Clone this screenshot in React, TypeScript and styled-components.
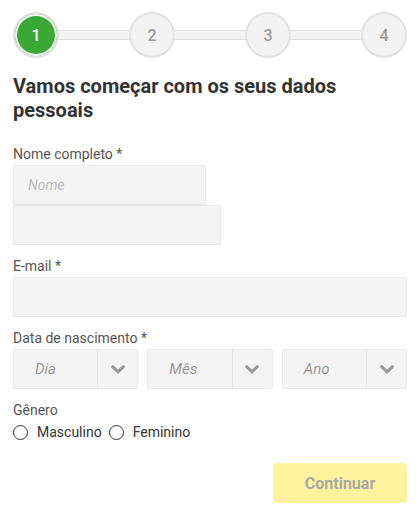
import { Fragment } from 'react';
import styled, { createGlobalStyle } from 'styled-components';

const GlobalStyle = createGlobalStyle`
  html, body {
    margin: 0;
    padding: 0;
    background: #ffffff;
    font-family: Roboto, 'Liberation Sans', sans-serif;
  }
`;

const Page = styled.div`
  width: 420px;
  box-sizing: border-box;
  padding: 12px 13px 0;
  color: #333;
`;

const Stepper = styled.div`
  display: flex;
  align-items: center;
`;

const StepCircle = styled.div<{ $active?: boolean }>`
  position: relative;
  z-index: 1;
  flex: none;
  width: 46px;
  height: 46px;
  box-sizing: border-box;
  border-radius: 50%;
  border: 2px solid #e2e2e2;
  background: ${(p) => (p.$active ? '#3aaa35' : '#f3f3f3')};
  box-shadow: ${(p) => (p.$active ? 'inset 0 0 0 2px #f4f4f4' : 'none')};
  display: flex;
  align-items: center;
  justify-content: center;
  font-size: 16px;
  font-weight: 500;
  color: ${(p) => (p.$active ? '#ffffff' : '#999')};
`;

const Connector = styled.div`
  flex: 1;
  height: 10px;
  margin: 0 -3px;
  box-sizing: border-box;
  background: #f3f3f3;
  border-top: 1px solid #e2e2e2;
  border-bottom: 1px solid #e2e2e2;
`;

const Title = styled.h1`
  margin: 16px 0 0;
  font-size: 20px;
  line-height: 24px;
  font-weight: 700;
  color: #333;
`;

const Form = styled.form`
  margin-top: 23px;
  display: flex;
  flex-direction: column;
`;

const Field = styled.div`
  display: flex;
  flex-direction: column;
  & + & {
    margin-top: 12px;
  }
`;

const Label = styled.label`
  font-size: 14px;
  line-height: 18px;
  color: #555;
  margin-bottom: 2px;
`;

const TextInput = styled.input<{ $width?: number }>`
  width: ${(p) => (p.$width ? `${p.$width}px` : '100%')};
  height: 40px;
  box-sizing: border-box;
  margin: 0;
  padding: 0 14px;
  background: #f4f4f4;
  border: 1px solid #e9e9e9;
  border-radius: 2px;
  font-family: inherit;
  font-size: 14px;
  color: #333;
  outline: none;
  &::placeholder {
    color: #bbb;
    font-style: italic;
  }
`;

const SelectRow = styled.div`
  display: grid;
  grid-template-columns: repeat(3, 1fr);
  gap: 9px;
`;

const SelectBox = styled.div`
  display: flex;
  height: 40px;
  box-sizing: border-box;
  background: #f4f4f4;
  border: 1px solid #e9e9e9;
  border-radius: 2px;
`;

const SelectText = styled.span`
  flex: 1;
  display: flex;
  align-items: center;
  padding-left: 21px;
  font-size: 15px;
  font-style: italic;
  color: #999;
`;

const SelectArrow = styled.span`
  width: 39px;
  display: flex;
  align-items: center;
  justify-content: center;
  border-left: 1px solid #e6e6e6;
  color: #999;
`;

const RadioRow = styled.div`
  display: flex;
  align-items: center;
  margin-top: 1px;
`;

const RadioOption = styled.label`
  display: flex;
  align-items: center;
  gap: 9px;
  font-size: 14px;
  line-height: 20px;
  color: #333;
  margin-right: 7px;
`;

const RadioDot = styled.span`
  width: 15px;
  height: 15px;
  box-sizing: border-box;
  border-radius: 50%;
  border: 1px solid #333;
  background: #fff;
`;

const Footer = styled.div`
  display: flex;
  justify-content: flex-end;
  margin-top: 21px;
`;

const SubmitButton = styled.button`
  width: 134px;
  height: 40px;
  border: none;
  border-radius: 4px;
  background: #fff3a0;
  color: #aaa8a0;
  font-family: inherit;
  font-size: 16px;
  font-weight: 700;
`;

const Chevron = () => (
  <svg width="14" height="9" viewBox="0 0 14 9" fill="none">
    <polyline
      points="1.8,1.8 7,6.8 12.2,1.8"
      stroke="currentColor"
      strokeWidth="3"
      strokeLinecap="square"
    />
  </svg>
);

const steps = ['1', '2', '3', '4'];
const dateParts = ['Dia', 'Mês', 'Ano'];

export default function App() {
  return (
    <>
      <GlobalStyle />
      <Page>
        <Stepper>
          {steps.map((s, i) => (
            <Fragment key={s}>
              {i > 0 && <Connector />}
              <StepCircle $active={i === 0}>{s}</StepCircle>
            </Fragment>
          ))}
        </Stepper>
        <Title>Vamos começar com os seus dados pessoais</Title>
        <Form onSubmit={(e) => e.preventDefault()}>
          <Field>
            <Label>Nome completo *</Label>
            <TextInput $width={193} placeholder="Nome" />
            <TextInput $width={208} />
          </Field>
          <Field>
            <Label>E-mail *</Label>
            <TextInput />
          </Field>
          <Field>
            <Label>Data de nascimento *</Label>
            <SelectRow>
              {dateParts.map((d) => (
                <SelectBox key={d}>
                  <SelectText>{d}</SelectText>
                  <SelectArrow>
                    <Chevron />
                  </SelectArrow>
                </SelectBox>
              ))}
            </SelectRow>
          </Field>
          <Field>
            <Label>Gênero</Label>
            <RadioRow>
              <RadioOption>
                <RadioDot />
                Masculino
              </RadioOption>
              <RadioOption>
                <RadioDot />
                Feminino
              </RadioOption>
            </RadioRow>
          </Field>
          <Footer>
            <SubmitButton type="submit">Continuar</SubmitButton>
          </Footer>
        </Form>
      </Page>
    </>
  );
}
